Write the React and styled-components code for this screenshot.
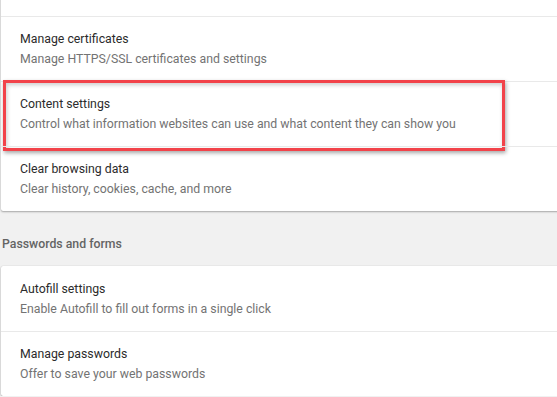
import React from "react";
import styled, { createGlobalStyle } from "styled-components";

const COLORS = {
  page: "#f1f1f1",
  card: "#ffffff",
  divider: "#e9e9e9",
  title: "#2b2b2b",
  subtitle: "#737373",
  header: "#646464",
  highlight: "#f2434a",
};

const GlobalStyle = createGlobalStyle`
  html, body {
    margin: 0;
    padding: 0;
    background: ${COLORS.page};
    overflow: hidden;
  }
  body {
    font-family: Roboto, "Liberation Sans", sans-serif;
    font-size: 12.3px;
  }
`;

const SECTIONS = [
  {
    id: "privacy",
    items: [
      { title: "Allow sites to check if you have payment methods saved" },
      {
        title: "Manage certificates",
        subtitle: "Manage HTTPS/SSL certificates and settings",
      },
      {
        title: "Content settings",
        subtitle:
          "Control what information websites can use and what content they can show you",
        highlighted: true,
      },
      {
        title: "Clear browsing data",
        subtitle: "Clear history, cookies, cache, and more",
      },
    ],
  },
  {
    id: "passwords",
    heading: "Passwords and forms",
    items: [
      {
        title: "Autofill settings",
        subtitle: "Enable Autofill to fill out forms in a single click",
      },
      {
        title: "Manage passwords",
        subtitle: "Offer to save your web passwords",
      },
    ],
  },
];

const App = () => {
  return (
    <>
      <GlobalStyle />
      <Page>
        {SECTIONS.map((section) => (
          <Section key={section.id}>
            {section.heading && <SectionHeading>{section.heading}</SectionHeading>}
            <Card>
              {section.items.map((item) => (
                <Row key={item.title} $single={!item.subtitle}>
                  <Title>{item.title}</Title>
                  {item.subtitle && <Subtitle>{item.subtitle}</Subtitle>}
                  {item.highlighted && <Highlight />}
                </Row>
              ))}
            </Card>
          </Section>
        ))}
      </Page>
    </>
  );
};

const Page = styled.main`
  display: flex;
  flex-direction: column;
  width: 620px;
  margin-top: -32px;
  padding-left: 1px;
`;

const Section = styled.section`
  display: flex;
  flex-direction: column;
`;

const SectionHeading = styled.h2`
  margin: 0;
  padding: 23px 0 12px 1px;
  font-size: 12.3px;
  line-height: 20px;
  font-weight: 500;
  color: ${COLORS.header};
`;

const Card = styled.div`
  display: flex;
  flex-direction: column;
  background: ${COLORS.card};
  border-radius: 2px;
  box-shadow: 0 1px 2px rgba(0, 0, 0, 0.3), 0 0 1px rgba(0, 0, 0, 0.2);
`;

const Row = styled.div`
  position: relative;
  display: flex;
  flex-direction: column;
  justify-content: center;
  min-height: ${(p) => (p.$single ? "48px" : "65px")};
  padding: 0 19px;
  box-sizing: border-box;

  & + & {
    border-top: 1px solid ${COLORS.divider};
  }
`;

const Title = styled.div`
  line-height: 20px;
  color: ${COLORS.title};
`;

const Subtitle = styled.div`
  line-height: 20px;
  color: ${COLORS.subtitle};
`;

const Highlight = styled.div`
  position: absolute;
  left: 2px;
  top: -2px;
  width: 502px;
  height: 71px;
  box-sizing: border-box;
  border: 3px solid ${COLORS.highlight};
  box-shadow: 1px 2px 4px rgba(0, 0, 0, 0.35),
    inset 1px 2px 4px rgba(0, 0, 0, 0.2);
  pointer-events: none;
`;

export default App;
